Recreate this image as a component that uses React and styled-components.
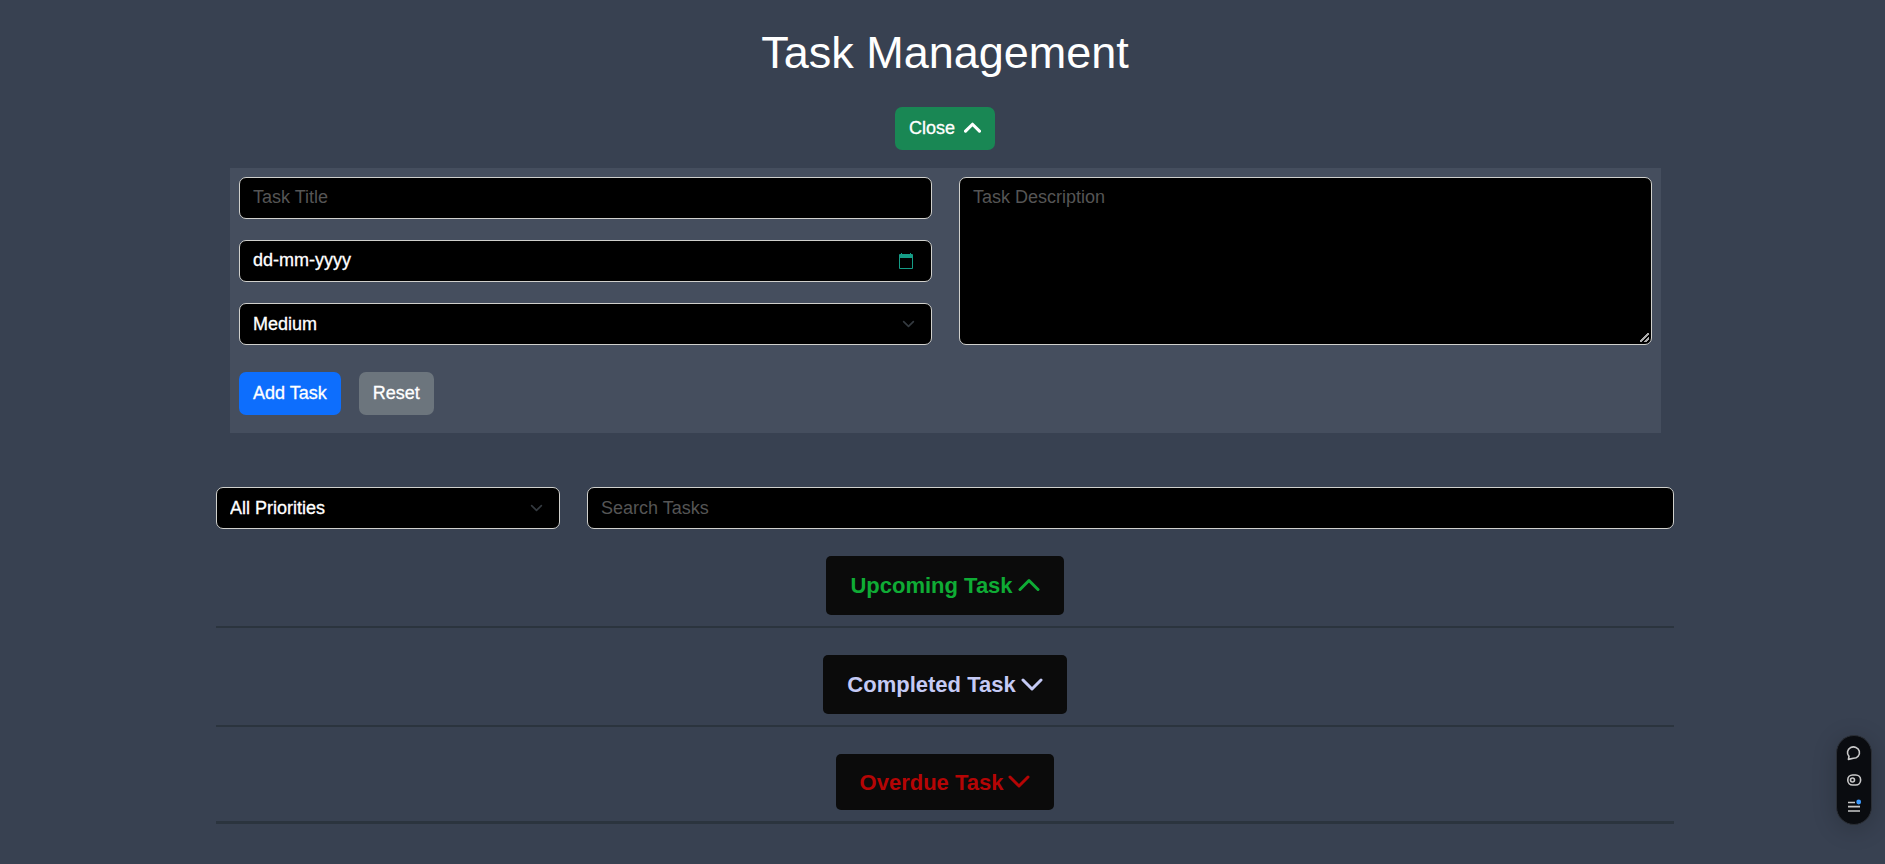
import React from "react";
import styled, { createGlobalStyle } from "styled-components";

const Global = createGlobalStyle`
  *, *::before, *::after { box-sizing: border-box; }
  body {
    margin: 0;
    background: #384151;
    color: #fff;
    font-family: "Liberation Sans", Arial, sans-serif;
    font-size: 18px;
    line-height: 27px;
  }
`;

const Page = styled.div`
  min-height: 100vh;
  padding: 26px 24px 32px 29px;
`;

const Container = styled.main`
  max-width: 1458px;
  margin: 0 auto;
`;

const Title = styled.h1`
  margin: 0;
  font-size: 45px;
  font-weight: 400;
  line-height: 54px;
  text-align: center;
`;

const Center = styled.div`
  display: flex;
  justify-content: center;
`;

const Button = styled.button`
  display: inline-flex;
  align-items: center;
  gap: 9px;
  height: 43px;
  padding: 0 14px;
  border: 0;
  border-radius: 7px;
  background: ${(p) => p.$color};
  color: #fff;
  font: inherit;
  -webkit-text-stroke: 0.3px;
`;

const CloseRow = styled(Center)`
  margin: 27px 0 18px;
`;

const Form = styled.form`
  display: grid;
  grid-template-columns: 1fr 1fr;
  column-gap: 27px;
  margin: 0 13px 0 14px;
  padding: 9px 9px 18px;
  background: #454e5e;
`;

const Fields = styled.div`
  display: flex;
  flex-direction: column;
  gap: 21px;
  input { padding-bottom: 2px; }
`;

const fieldStyle = `
  display: block;
  width: 100%;
  height: 42px;
  margin: 0;
  padding: 0 13px;
  border: 1px solid #d0d0cc;
  border-radius: 7px;
  background: #000;
  color: #fff;
  font: inherit;
  outline: 0;
`;

const Input = styled.input`
  ${fieldStyle}
  &::placeholder { color: #555; opacity: 1; }
`;

const DateInput = styled(Input)`
  &::placeholder { color: #fff; -webkit-text-stroke: 0.3px #fff; }
`;

const Textarea = styled.textarea`
  ${fieldStyle}
  height: 100%;
  padding: 6px 13px;
  &::placeholder { color: #555; opacity: 1; }
  &::-webkit-resizer {
    background: linear-gradient(135deg, transparent 42%, #aaa 42%, #aaa 58%, transparent 58%, transparent 72%, #aaa 72%, #aaa 86%, transparent 86%) 4px 4px / 9px 9px no-repeat;
  }
`;

const SelectInput = styled.select`
  ${fieldStyle}
  appearance: none;
  -webkit-text-stroke: 0.3px;
`;

const Holder = styled.div`
  position: relative;
  svg {
    position: absolute;
    top: 50%;
    right: ${(p) => p.$inset || 17}px;
    transform: translateY(-50%);
    pointer-events: none;
  }
`;

const Actions = styled.div`
  display: flex;
  gap: 18px;
  margin-top: 27px;
`;

const Filters = styled.div`
  display: grid;
  grid-template-columns: 344fr 1087fr;
  column-gap: 27px;
  margin: 54px 0 27px;
`;

const Section = styled.section`
  display: flex;
  justify-content: center;
  margin-bottom: 27px;
  padding-bottom: 11px;
  border-bottom: 2px solid #2b343e;
  &:last-child { border-bottom-width: 3px; }
`;

const SectionButton = styled.button`
  display: inline-flex;
  align-items: center;
  gap: 5px;
  height: ${(p) => p.$height}px;
  padding: 0 24px;
  border: 0;
  border-radius: 5px;
  background: #0b0b0b;
  color: ${(p) => p.$color};
  font: bold 22px/29px "Liberation Sans", Arial, sans-serif;
`;

const Dock = styled.aside`
  position: fixed;
  right: 13px;
  bottom: 39px;
  display: flex;
  flex-direction: column;
  align-items: center;
  justify-content: space-between;
  width: 36px;
  height: 90px;
  padding: 9px 0 11px;
  border: 1px solid #2b2f36;
  border-radius: 18px;
  background: #0a0c10;
  box-shadow: 0 4px 24px rgba(0, 0, 0, 0.2);
`;

const DockButton = styled.button`
  display: flex;
  padding: 0;
  border: 0;
  background: none;
  color: #c9c9c9;
`;

const Chevron = ({ up, size = 22, width = 3 }) => (
  <svg width={size} height={size} viewBox="0 0 22 22" fill="none" stroke="currentColor" strokeWidth={width} strokeLinecap="round" strokeLinejoin="round" aria-hidden="true">
    <path d={up ? "M2 14.5 11 5.5 20 14.5" : "M2 6 11 15 20 6"} />
  </svg>
);

const Select = ({ label, options }) => (
  <Holder>
    <SelectInput aria-label={label} defaultValue={options[0]}>
      {options.map((o) => <option key={o}>{o}</option>)}
    </SelectInput>
    <svg width="13" height="13" viewBox="0 0 16 16" fill="none" stroke="#343a40" strokeWidth="2" strokeLinecap="round" strokeLinejoin="round" aria-hidden="true">
      <path d="m2 5 6 6 6-6" />
    </svg>
  </Holder>
);

const sections = [
  { name: "Upcoming Task", color: "#0fac35", height: 59, up: true },
  { name: "Completed Task", color: "#c5caf5", height: 59 },
  { name: "Overdue Task", color: "#b50505", height: 56 },
];

export default function App() {
  return (
    <Page>
      <Global />
      <Container>
        <Title>Task Management</Title>
        <CloseRow>
          <Button type="button" $color="#198754">
            Close <Chevron up size={17} width={4} />
          </Button>
        </CloseRow>
        <Form>
          <Fields>
            <Input aria-label="Task title" placeholder="Task Title" />
            <Holder $inset={18}>
              <DateInput aria-label="Due date" placeholder="dd-mm-yyyy" />
              <svg width="16" height="16" viewBox="0 0 16 16" fill="#159c86" aria-hidden="true">
                <path fillRule="evenodd" d="M3 0h1v1h8V0h1v1h1a1 1 0 0 1 1 1v13a1 1 0 0 1-1 1H2a1 1 0 0 1-1-1V2a1 1 0 0 1 1-1h1zM2 5v10h12V5z" />
              </svg>
            </Holder>
            <Select label="Priority" options={["Medium", "High", "Low"]} />
          </Fields>
          <Textarea aria-label="Task description" placeholder="Task Description" />
          <Actions>
            <Button type="submit" $color="#0d6efd">Add Task</Button>
            <Button type="reset" $color="#6c757d">Reset</Button>
          </Actions>
        </Form>
        <Filters>
          <Select label="Filter by priority" options={["All Priorities", "High", "Medium", "Low"]} />
          <Input aria-label="Search tasks" placeholder="Search Tasks" />
        </Filters>
        {sections.map((s) => (
          <Section key={s.name}>
            <SectionButton type="button" $color={s.color} $height={s.height}>
              {s.name}
              <Chevron up={s.up} />
            </SectionButton>
          </Section>
        ))}
      </Container>
      <Dock>
        <DockButton type="button" aria-label="Comments">
          <svg width="16" height="16" viewBox="0 0 16 16" fill="none" stroke="currentColor" strokeWidth="1.6" strokeLinejoin="round">
            <path d="M2.4 14.4 3 11.4A6 5.7 0 1 1 7.4 13.3Z" />
          </svg>
        </DockButton>
        <DockButton type="button" aria-label="Toggle view">
          <svg width="16" height="14" viewBox="0 0 16 14" fill="none" stroke="currentColor" strokeWidth="1.6">
            <rect x="1.8" y="2" width="12.8" height="10" rx="4.8" />
            <circle cx="6.5" cy="7" r="2" />
          </svg>
        </DockButton>
        <DockButton type="button" aria-label="Menu">
          <svg width="16" height="14" viewBox="0 0 16 14" fill="none" stroke="currentColor" strokeWidth="1.7">
            <path d="M2 3.5h7M2 7.7h12M2 12h12" />
            <circle cx="12.7" cy="3" r="2.4" fill="#3d9bff" stroke="none" />
          </svg>
        </DockButton>
      </Dock>
    </Page>
  );
}
